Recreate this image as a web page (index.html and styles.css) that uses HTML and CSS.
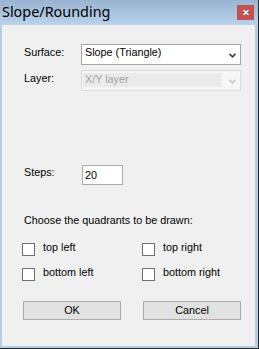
FILE: index.html
```html
<!DOCTYPE html>
<html>
<head>
<meta charset="utf-8">
<link rel="stylesheet" href="styles.css">
</head>
<body>
<div class="window">
  <div class="titlebar">
    <span class="title">Slope/Rounding</span>
    <div class="close">
      <svg width="6" height="5" viewBox="0 0 6 5">
        <rect x="0" y="0" width="2" height="1" fill="#fff"/>
        <rect x="4" y="0" width="2" height="1" fill="#fff"/>
        <rect x="1" y="1" width="4" height="1" fill="#fff"/>
        <rect x="2" y="2" width="2" height="1" fill="#fff"/>
        <rect x="1" y="3" width="4" height="1" fill="#fff"/>
        <rect x="0" y="4" width="2" height="1" fill="#fff"/>
        <rect x="4" y="4" width="2" height="1" fill="#fff"/>
      </svg>
    </div>
  </div>
  <div class="client">
    <div class="field-row">
      <span class="label">Surface:</span>
      <div class="combo">
        <span class="combo-text">Slope (Triangle)</span>
        <svg class="chev" width="7" height="5" viewBox="0 0 7 5"><path d="M0.5 0.8 L3.5 3.8 L6.5 0.8" fill="none" stroke="#404040" stroke-width="1.6"/></svg>
      </div>
    </div>
    <div class="field-row row-layer">
      <span class="label">Layer:</span>
      <div class="combo combo-disabled">
        <span class="combo-fill">X/Y layer</span>
        <svg class="chev" width="7" height="5" viewBox="0 0 7 5"><path d="M0.5 0.8 L3.5 3.8 L6.5 0.8" fill="none" stroke="#c4c4c4" stroke-width="1.6"/></svg>
      </div>
    </div>
    <div class="field-row row-steps">
      <span class="label label-steps">Steps:</span>
      <div class="textbox">20</div>
    </div>
    <div class="choose">Choose the quadrants to be drawn:</div>
    <div class="checks">
      <div class="check"><span class="box"></span><span class="check-label">top left</span></div>
      <div class="check"><span class="box"></span><span class="check-label">top right</span></div>
      <div class="check"><span class="box"></span><span class="check-label">bottom left</span></div>
      <div class="check"><span class="box"></span><span class="check-label">bottom right</span></div>
    </div>
    <div class="buttons">
      <div class="btn">OK</div>
      <div class="btn">Cancel</div>
    </div>
  </div>
</div>
</body>
</html>
```

FILE: styles.css
```css
body {
  margin: 0;
  background: #b9d1ea;
}
.window {
  width: 259px;
  height: 349px;
  box-sizing: border-box;
  border-right: 1px solid #2b2b2b;
  border-bottom: 1px solid #2b2b2b;
  background: #b3cde9;
  display: flex;
  flex-direction: column;
  font-family: "Liberation Sans", Arial, sans-serif;
  font-size: 10.8px;
  color: #000;
}
.titlebar {
  height: 25px;
  flex: none;
  display: flex;
  align-items: flex-start;
  background: linear-gradient(#99b4d1, #bad2eb);
}
.title {
  font-family: "Noto Sans", "Open Sans", sans-serif;
  font-size: 14.4px;
  line-height: 20px;
  margin: 2px 0 0 2px;
  color: #000;
}
.close {
  margin-left: auto;
  margin-top: 5px;
  margin-right: 4px;
  width: 17px;
  height: 15px;
  background: #c75050;
  display: flex;
  align-items: center;
  justify-content: center;
}
.client {
  flex: 1;
  margin: 0 3px 2px 2px;
  background: #f0f0f0;
  padding: 19px 0 0 22px;
  display: flex;
  flex-direction: column;
  line-height: 13px;
}
.field-row {
  display: flex;
  align-items: flex-start;
}
.row-layer {
  margin-top: 5px;
}
.row-steps {
  margin-top: 74px;
}
.label {
  width: 57px;
  padding-top: 2px;
  flex: none;
}
.label-steps {
  padding-top: 1px;
}
.combo {
  width: 160px;
  height: 21px;
  box-sizing: border-box;
  border: 1px solid #a5a5a5;
  background: #fff;
  display: flex;
  align-items: flex-start;
  padding: 1px 0 0 3px;
}
.chev {
  margin-left: auto;
  margin-right: 4px;
  margin-top: 7px;
}
.combo-disabled {
  border-color: #d9d9d9;
  background: #f6f6f6;
  padding: 2px 0 0 1px;
}
.combo-fill {
  width: 137px;
  height: 14px;
  background: #eaeaea;
  color: #a3a3a3;
  padding-left: 2px;
  line-height: 13px;
}
.combo-disabled .chev {
  margin-top: 6px;
}
.textbox {
  margin-left: 1px;
  width: 41px;
  height: 20px;
  box-sizing: border-box;
  border: 1px solid #ababab;
  background: #fff;
  padding: 3px 0 0 2px;
}
.choose {
  margin-top: 29px;
}
.checks {
  margin-top: 14px;
  margin-left: -2px;
  display: grid;
  grid-template-columns: 120px 120px;
  row-gap: 10px;
}
.check {
  display: flex;
  align-items: flex-start;
  height: 15px;
}
.box {
  width: 13px;
  height: 13px;
  box-sizing: border-box;
  border: 1px solid #707070;
  background: #fff;
  margin-top: 2px;
  flex: none;
}
.check-label {
  margin-left: 8px;
}
.buttons {
  margin-top: 20px;
  margin-left: -1px;
  display: flex;
  gap: 22px;
}
.btn {
  width: 98px;
  height: 19px;
  box-sizing: border-box;
  border: 1px solid #adadad;
  background: #e1e1e1;
  display: flex;
  align-items: center;
  justify-content: center;
}
```
